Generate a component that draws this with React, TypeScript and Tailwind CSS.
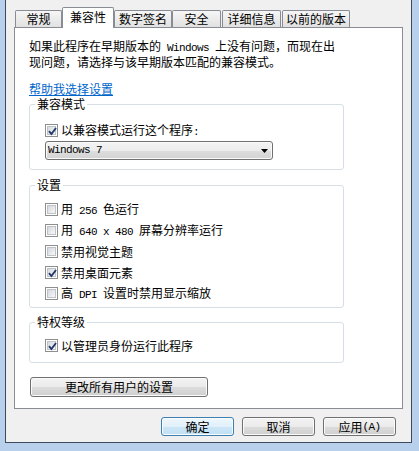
import React from 'react';

const Mono: React.FC<{ children: React.ReactNode }> = ({ children }) => (
  <span className="whitespace-pre font-['Liberation_Mono',monospace] text-[11px] tracking-[-0.6px]">{children}</span>
);

const Check: React.FC<{ checked?: boolean }> = ({ checked }) => (
  <span className="relative flex h-[13px] w-[13px] shrink-0 border border-[#8e8f8f] bg-white p-[1px]">
    <span className="flex-1 border border-[#bfc3c8] bg-linear-to-br from-[#d4d8dd] to-[#f7f8f9]" />
    {checked && (
      <svg className="absolute inset-0" width="13" height="13" viewBox="0 0 13 13">
        <path d="M3 6.2 L5.4 9 L10 3" fill="none" stroke="#23386b" strokeWidth="1.9" />
      </svg>
    )}
  </span>
);

const Row: React.FC<{ checked?: boolean; children: React.ReactNode }> = ({ checked, children }) => (
  <div className="flex h-[13px] items-center gap-[3px]">
    <Check checked={checked} />
    <span className="whitespace-nowrap leading-[13px]">{children}</span>
  </div>
);

const Group: React.FC<{ title: string; className?: string; children: React.ReactNode }> = ({
  title,
  className,
  children,
}) => (
  <fieldset className={`w-[315px] rounded-[3px] border border-[#d5dfe5] ${className ?? ''}`}>
    <legend className="ml-[5px] px-[2px] leading-[14px]">{title}</legend>
    {children}
  </fieldset>
);

const WinButton: React.FC<{ primary?: boolean; className?: string; children: React.ReactNode }> = ({
  primary,
  className,
  children,
}) => (
  <div
    className={`flex items-center justify-center rounded-[3px] border leading-[14px] shadow-[inset_0_0_0_1px_#fbfbfb] ${
      primary
        ? 'border-[#3c7fb1] bg-[linear-gradient(#eef7fd_0%,#e1f0fa_50%,#cde6f6_50%,#c1e0f4_100%)]'
        : 'border-[#707070] bg-[linear-gradient(#f3f3f3_0%,#ebebeb_50%,#dddddd_50%,#cfcfcf_100%)]'
    } ${className ?? ''}`}
  >
    {children}
  </div>
);

const tabs = [
  { label: '常规', cls: 'ml-[1px] w-[47px]' },
  { label: '兼容性', cls: 'w-[52px]', active: true },
  { label: '数字签名', cls: 'w-[58px]' },
  { label: '安全', cls: 'w-[49px]' },
  { label: '详细信息', cls: 'ml-[1px] w-[59px]' },
  { label: '以前的版本', cls: 'ml-[1px] w-[68px]' },
];

export default function App() {
  return (
    <div className="h-[451px] w-[419px] bg-[#b8d0ec] pb-[8px] pl-[5px] pr-[7px] font-['Noto_Sans_CJK_SC','Noto_Sans',sans-serif] text-[12px] text-black">
      <div className="flex h-full flex-col border-x border-b border-[#3b4a5c] bg-[#f0f0f0] px-[8px] pt-[7px]">
        {/* tabs */}
        <div className="flex h-[20px] items-end">
          {tabs.map((t) =>
            t.active ? (
              <div
                key={t.label}
                className={`relative z-10 -mb-[1px] h-[21px] rounded-t-[2px] border-x border-t border-[#898c95] bg-white pt-[2px] text-center leading-[14px] ${t.cls}`}
              >
                {t.label}
              </div>
            ) : (
              <div
                key={t.label}
                className={`h-[17px] rounded-t-[2px] border-x border-t border-[#898c95] bg-linear-to-b from-[#f6f6f6] to-[#e1e1e1] text-center leading-[15px] ${t.cls}`}
              >
                {t.label}
              </div>
            ),
          )}
        </div>

        {/* panel */}
        <div className="h-[382px] border border-[#898c95] bg-white pl-[14px] pt-[11px]">
          <p className="whitespace-nowrap leading-[13px]">
            如果此程序在早期版本的<Mono> Windows </Mono>上没有问题，而现在出
            <br />
            现问题，请选择与该早期版本匹配的兼容模式。
          </p>
          <div className="mt-[14px] h-[13px] leading-[13px]">
            <span className="text-[#0066cc] underline underline-offset-[1px]">帮助我选择设置</span>
          </div>

          <Group title="兼容模式" className="mt-[2px]">
            <div className="px-[15px] pb-[9px] pt-[13px]">
              <Row checked>
                以兼容模式运行这个程序<Mono>:</Mono>
              </Row>
              <div className="mt-[4px] flex h-[19px] w-[228px] items-center justify-between rounded-[3px] border border-[#707070] bg-[linear-gradient(#f4f4f4_0%,#ececec_50%,#dedede_50%,#d3d3d3_100%)] pl-[2px] pr-[4px] shadow-[inset_0_0_0_1px_#fafafa]">
                <Mono>Windows 7</Mono>
                <svg width="7" height="4" viewBox="0 0 7 4">
                  <polygon points="0,0 7,0 3.5,4" fill="#000" />
                </svg>
              </div>
            </div>
          </Group>

          <Group title="设置" className="mt-[8px]">
            <div className="flex flex-col gap-[8px] px-[15px] pb-[7px] pt-[11px]">
              <Row>
                用<Mono> 256 </Mono>色运行
              </Row>
              <Row>
                用<Mono> 640 x 480 </Mono>屏幕分辨率运行
              </Row>
              <Row>禁用视觉主题</Row>
              <Row checked>禁用桌面元素</Row>
              <Row>
                高<Mono> DPI </Mono>设置时禁用显示缩放
              </Row>
            </div>
          </Group>

          <Group title="特权等级" className="mt-[7px]">
            <div className="px-[15px] pb-[10px] pt-[10px]">
              <Row checked>以管理员身份运行此程序</Row>
            </div>
          </Group>

          <WinButton className="ml-[1px] mt-[14px] h-[20px] w-[178px]">更改所有用户的设置</WinButton>
        </div>

        {/* dialog buttons */}
        <div className="mt-[8px] flex justify-end gap-[8px] pr-[7px]">
          <WinButton primary className="h-[19px] w-[73px]">
            确定
          </WinButton>
          <WinButton className="h-[19px] w-[73px]">取消</WinButton>
          <WinButton className="h-[19px] w-[73px]">
            应用<Mono>(A)</Mono>
          </WinButton>
        </div>
      </div>
    </div>
  );
}
